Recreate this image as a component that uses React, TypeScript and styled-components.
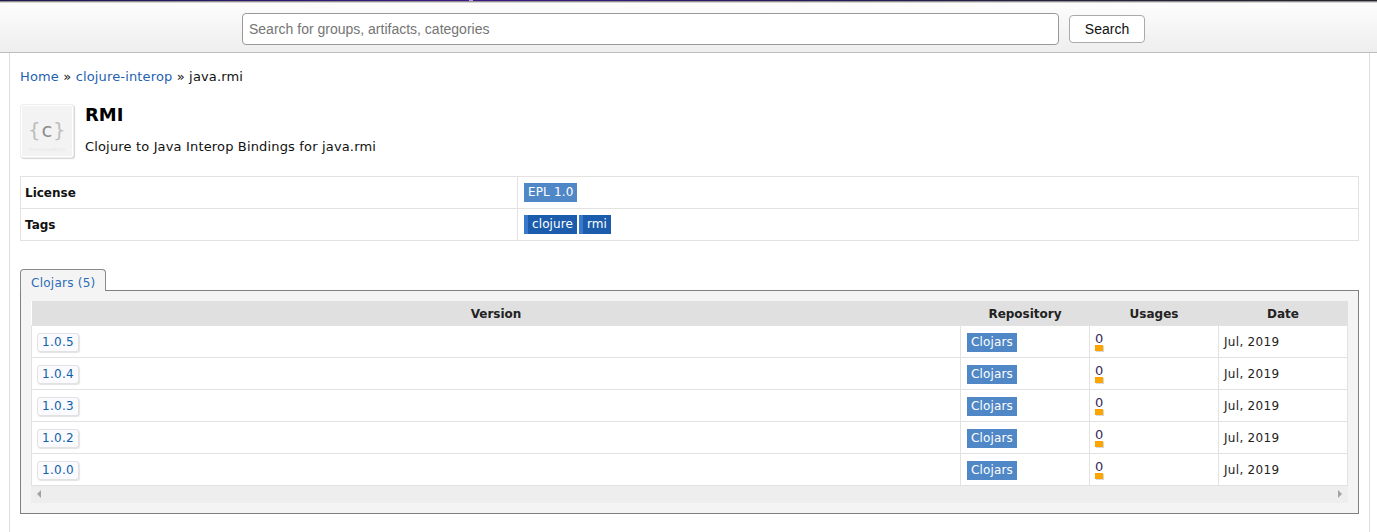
import React from "react";
import styled, { createGlobalStyle } from "styled-components";

const Global = createGlobalStyle`
  html, body { margin: 0; padding: 0; background: #fff; }
  body { font-family: "DejaVu Sans", Verdana, sans-serif; font-size: 13px; color: #000; overflow: hidden; }
`;
const Page = styled.div`width: 1377px; height: 532px; overflow: hidden;`;
const TopStrip = styled.div`
  height: 3px;
  background:
    linear-gradient(90deg, #1d1a4a 0, #2a1a66 200px, #3f1a85 469px, #b79be0 469px, #b79be0 473px, #3f1a85 473px, #2a1a5c 800px, #25233a 1100px, #25252f 1377px) top / 100% 1px no-repeat,
    linear-gradient(#8f8f8f 0, #8f8f8f 2px, #d6d6d6 2px, #d6d6d6 3px);
`;
const Header = styled.header`
  box-sizing: border-box;
  height: 50px;
  padding-top: 10px;
  padding-left: 242px;
  display: flex;
  align-items: flex-start;
  gap: 10px;
  background: linear-gradient(#fdfdfd, #eeeeee);
  border-bottom: 1px solid #bdbdbd;
`;
const SearchInput = styled.input`
  box-sizing: border-box;
  width: 817px;
  height: 32px;
  padding: 0 6px;
  border: 1px solid #999;
  border-radius: 4px;
  background: #fff;
  font-family: "Liberation Sans", Arial, sans-serif;
  font-size: 14px;
  outline: none;
  &::placeholder { color: #757575; opacity: 1; }
`;
const SearchButton = styled.button`
  box-sizing: border-box;
  width: 76px;
  height: 28px;
  margin-top: 2px;
  border: 1px solid #aaa;
  border-radius: 4px;
  background: #fff;
  color: #111;
  font-family: "Liberation Sans", Arial, sans-serif;
  font-size: 14px;
  padding: 0;
`;
const Main = styled.main`
  box-sizing: border-box;
  width: 1361px;
  margin-left: 9px;
  padding: 0 10px;
  height: 479px;
  border-left: 1px solid #dcdcdc;
  border-right: 1px solid #dcdcdc;
`;
const Crumbs = styled.nav`
  height: 16px;
  padding-top: 16px;
  line-height: 16px;
  color: #111;
  letter-spacing: 0.15px;
`;
const Link = styled.a`color: #1e62b0; text-decoration: none;`;
const Intro = styled.section`
  display: flex;
  gap: 11px;
  margin-top: 19px;
  height: 54px;
`;
const Logo = styled.div`
  box-sizing: border-box;
  position: relative;
  width: 54px;
  height: 54px;
  background: #f3f3f3;
  border: 1px solid #eee;
  border-radius: 3px;
  box-shadow: 1px 1px 1px #d4d4d4, inset 0 0 0 1px #fff;
  display: flex;
  align-items: center;
  justify-content: center;
  color: #bdbdbd;
  font-family: "DejaVu Sans Mono", monospace;
  font-size: 20px;
  letter-spacing: 0.5px;
  padding-bottom: 2px;
`;
const LogoLetter = styled.span`color: #8c8c8c;`;
const LogoCaption = styled.span`
  position: absolute;
  left: 0;
  right: 0;
  bottom: 5px;
  text-align: center;
  font-family: "DejaVu Sans", sans-serif;
  font-size: 5px;
  line-height: 6px;
  letter-spacing: 0;
  color: #e6e6e6;
`;
const IntroText = styled.div`display: flex; flex-direction: column;`;
const Title = styled.h2`
  margin: 1px 0 0;
  font-size: 18px;
  line-height: 20px;
  font-weight: bold;
  color: #000;
`;
const Subtitle = styled.p`
  margin: 14px 0 0;
  line-height: 16px;
  color: #111;
  letter-spacing: 0.16px;
`;
const InfoTable = styled.table`
  width: 1339px;
  margin-top: 18px;
  border-collapse: collapse;
  table-layout: fixed;
  border: 1px solid #e2e2e2;
`;
const InfoLabel = styled.th`
  box-sizing: border-box;
  width: 497px;
  height: 32px;
  padding: 0 4px;
  text-align: left;
  border: 1px solid #e2e2e2;
  color: #111;
  font-size: 12px;
`;
const InfoValue = styled.td`
  box-sizing: border-box;
  padding: 0 6px;
  height: 32px;
  border: 1px solid #e2e2e2;
`;
const LicenseBadge = styled.span`
  display: inline-block;
  height: 19px;
  line-height: 19px;
  padding: 0 4px;
  background: #5087c7;
  color: #fff;
  font-size: 12px;
  letter-spacing: 0.15px;
  vertical-align: middle;
`;
const Tag = styled.span`
  display: inline-block;
  box-sizing: border-box;
  height: 19px;
  line-height: 19px;
  padding: 0 4px;
  margin-right: 2px;
  background: #1b5cac;
  border-left: 4px solid #3a78cc;
  color: #fff;
  font-size: 12px;
  letter-spacing: 0.1px;
  vertical-align: middle;
`;
const Tabs = styled.div`margin-top: 28px;`;
const Tab = styled.div`
  box-sizing: border-box;
  position: relative;
  z-index: 1;
  width: 86px;
  height: 22px;
  padding: 5px 0 0 10px;
  line-height: 16px;
  font-size: 12px;
  letter-spacing: 0.25px;
  color: #2b6cb8;
  background: #f4f4f4;
  border: 1px solid #8a8a8a;
  border-bottom: none;
  border-radius: 4px 4px 0 0;
`;
const Panel = styled.div`
  box-sizing: border-box;
  width: 1339px;
  height: 224px;
  margin-top: -1px;
  padding: 10px;
  background: #f4f4f4;
  border: 1px solid #808080;
`;
const VersionTable = styled.table`
  width: 1317px;
  border-collapse: collapse;
  table-layout: fixed;
  background: #fff;
`;
const HeadCell = styled.th<{ $w?: number }>`
  box-sizing: border-box;
  ${(p) => (p.$w ? `width: ${p.$w}px;` : "")}
  height: 24px;
  padding: 2px 0 0;
  background: #e0e0e0;
  font-size: 12px;
  color: #222;
`;
const Cell = styled.td`
  box-sizing: border-box;
  height: 32px;
  padding: 2px 5px 0;
  border: 1px solid #e2e2e2;
  font-size: 12px;
  letter-spacing: 0.3px;
  color: #222;
  white-space: nowrap;
`;
const VersionLink = styled.a`
  display: inline-block;
  box-sizing: border-box;
  height: 19px;
  line-height: 17px;
  padding: 0 4px;
  background: #fafaff;
  border: 1px solid #e2e2e2;
  border-radius: 3px;
  box-shadow: 1px 1px 1px #e4e4e4;
  color: #0f62a8;
  font-size: 12px;
  vertical-align: middle;
`;
const RepoBadge = styled.span`
  display: inline-block;
  height: 19px;
  line-height: 19px;
  margin-left: 1px;
  padding: 0 4px;
  background: #5087c7;
  color: #fff;
  font-size: 12px;
  letter-spacing: 0.15px;
  vertical-align: middle;
`;
const Usage = styled.div`display: flex; flex-direction: column; align-items: flex-start; margin-top: -1px;`;
const UsageCount = styled.span`line-height: 13px; font-size: 13px; letter-spacing: 0; color: #3a2a5a;`;
const UsageBar = styled.span`
  display: block;
  width: 8px;
  height: 6px;
  background: #ffa500;
  box-shadow: 1px 1px 0 #d8d8d8;
`;
const Scrollbar = styled.div`
  box-sizing: border-box;
  width: 1317px;
  height: 17px;
  padding: 0 6px;
  background: #eeeeee;
  display: flex;
  align-items: center;
  justify-content: space-between;
`;
const Arrow = styled.span<{ $dir: "l" | "r" }>`
  width: 0;
  height: 0;
  border-top: 4px solid transparent;
  border-bottom: 4px solid transparent;
  ${(p) => (p.$dir === "l" ? "border-right: 4px solid #a3a3a3;" : "border-left: 4px solid #a3a3a3;")}
`;

const versions = ["1.0.5", "1.0.4", "1.0.3", "1.0.2", "1.0.0"];

export default function App() {
  return (
    <Page>
      <Global />
      <TopStrip />
      <Header>
        <SearchInput placeholder="Search for groups, artifacts, categories" />
        <SearchButton>Search</SearchButton>
      </Header>
      <Main>
        <Crumbs>
          <Link>Home</Link> » <Link>clojure-interop</Link> » java.rmi
        </Crumbs>
        <Intro>
          <Logo>
            {"{"}<LogoLetter>c</LogoLetter>{"}"}
            <LogoCaption>mvnrepository</LogoCaption>
          </Logo>
          <IntroText>
            <Title>RMI</Title>
            <Subtitle>Clojure to Java Interop Bindings for java.rmi</Subtitle>
          </IntroText>
        </Intro>
        <InfoTable>
          <tbody>
            <tr>
              <InfoLabel>License</InfoLabel>
              <InfoValue><LicenseBadge>EPL 1.0</LicenseBadge></InfoValue>
            </tr>
            <tr>
              <InfoLabel>Tags</InfoLabel>
              <InfoValue><Tag>clojure</Tag><Tag>rmi</Tag></InfoValue>
            </tr>
          </tbody>
        </InfoTable>
        <Tabs>
          <Tab>Clojars (5)</Tab>
          <Panel>
            <VersionTable>
              <thead>
                <tr>
                  <HeadCell>Version</HeadCell>
                  <HeadCell $w={129}>Repository</HeadCell>
                  <HeadCell $w={129}>Usages</HeadCell>
                  <HeadCell $w={129}>Date</HeadCell>
                </tr>
              </thead>
              <tbody>
                {versions.map((v) => (
                  <tr key={v}>
                    <Cell><VersionLink>{v}</VersionLink></Cell>
                    <Cell><RepoBadge>Clojars</RepoBadge></Cell>
                    <Cell>
                      <Usage>
                        <UsageCount>0</UsageCount>
                        <UsageBar />
                      </Usage>
                    </Cell>
                    <Cell>Jul, 2019</Cell>
                  </tr>
                ))}
              </tbody>
            </VersionTable>
            <Scrollbar>
              <Arrow $dir="l" />
              <Arrow $dir="r" />
            </Scrollbar>
          </Panel>
        </Tabs>
      </Main>
    </Page>
  );
}
